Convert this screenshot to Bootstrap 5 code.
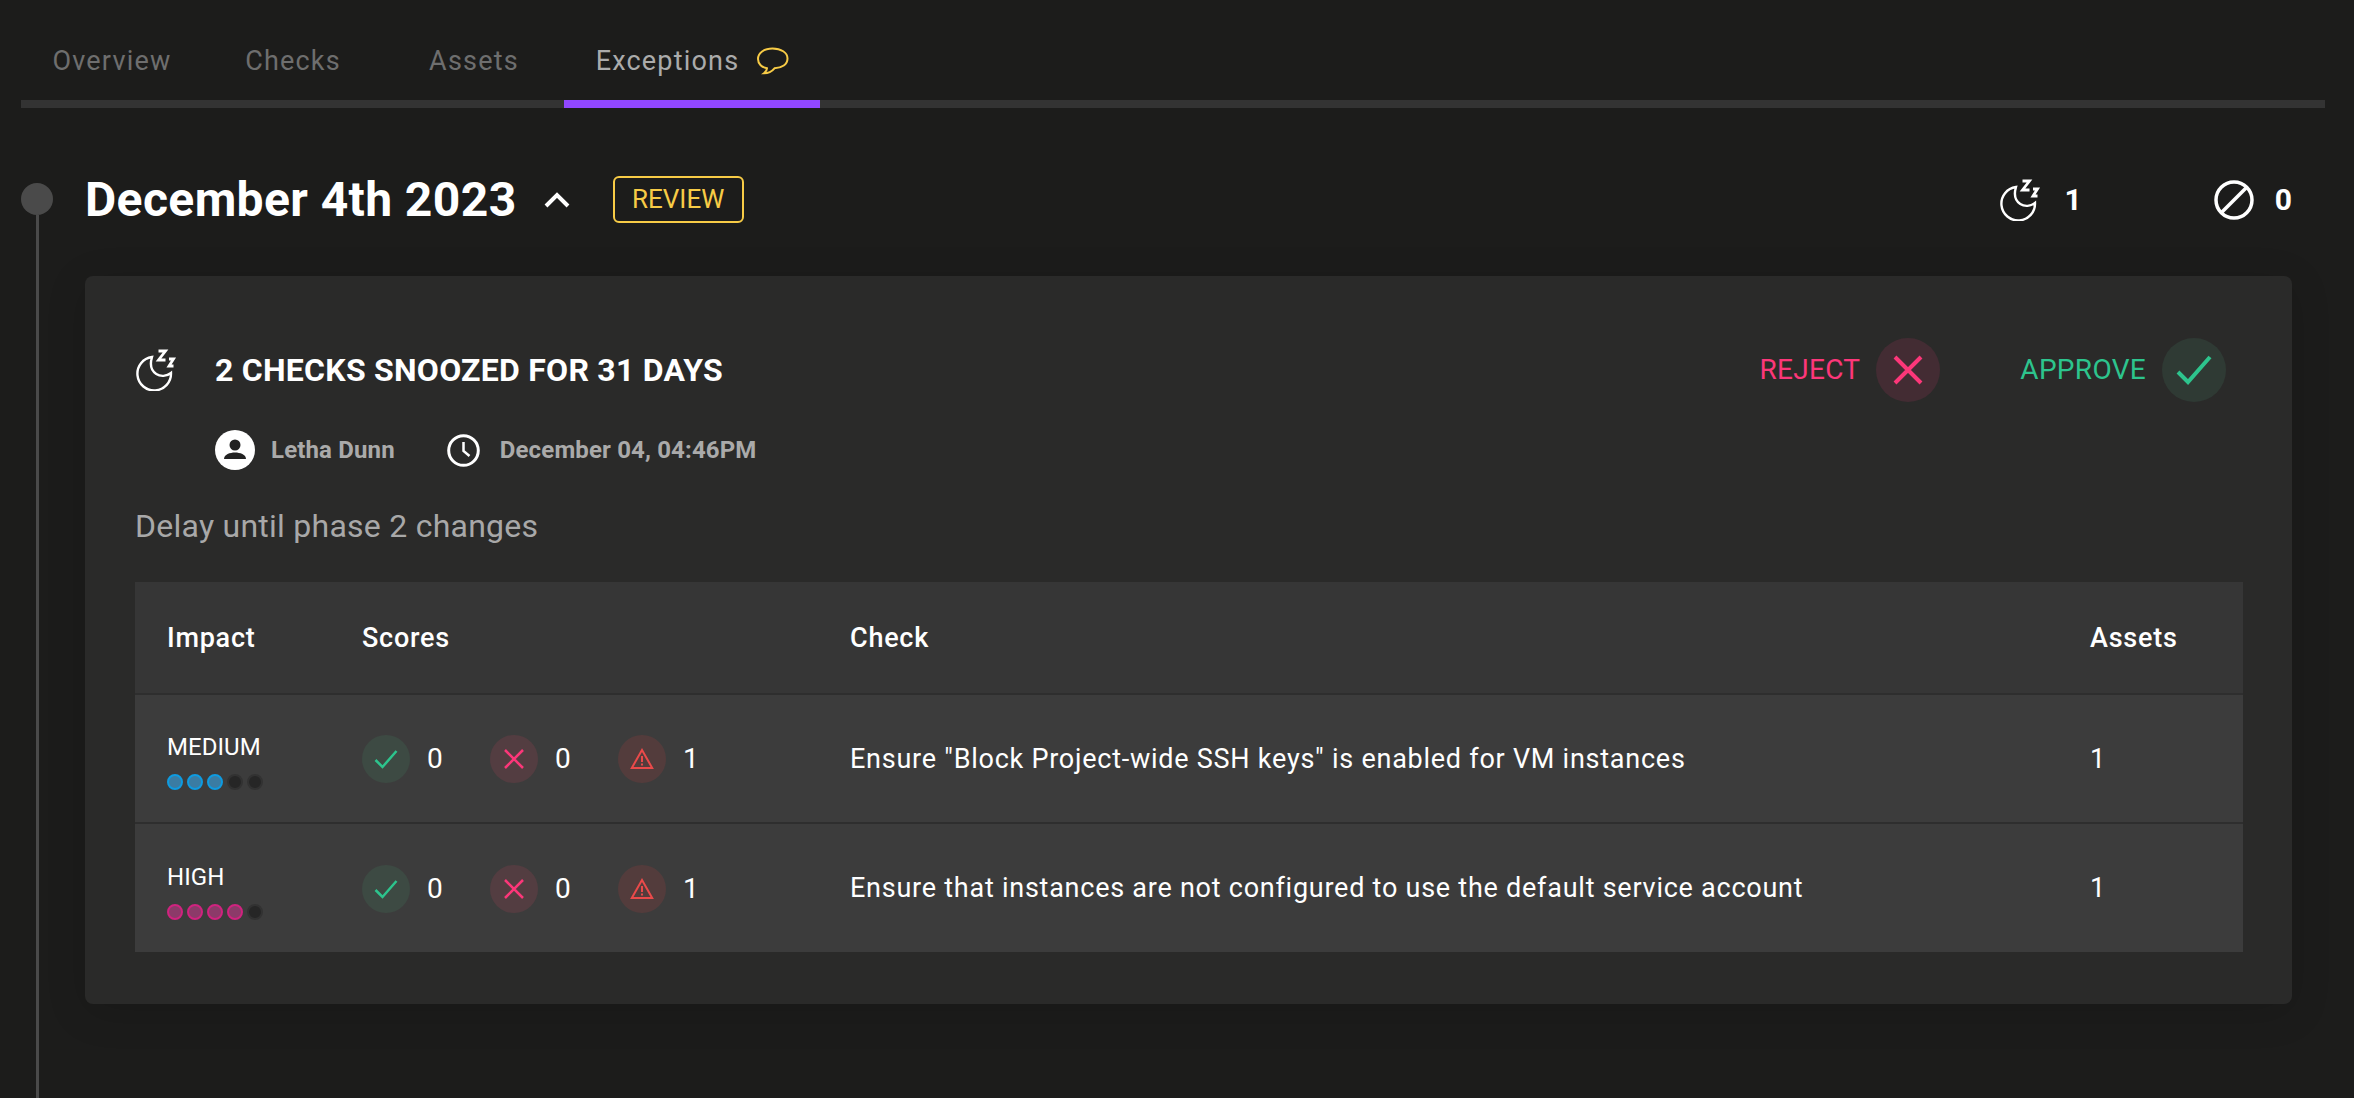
<!DOCTYPE html>
<html lang="en">
<head>
<meta charset="UTF-8">
<title>Exceptions</title>
<link href="https://cdn.jsdelivr.net/npm/bootstrap@5.3.0/dist/css/bootstrap.min.css" rel="stylesheet">
<style>
body { background: #1c1c1b; font-family: Roboto, "Liberation Sans", sans-serif; color: #fff; overflow: hidden; }
svg { display: block; flex-shrink: 0; }

/* tabs */
.tab-bar { margin: 0 29px 0 21px; height: 108px; border-bottom: 8px solid #333; }
.tab-bar .nav-link { width: 181px; height: 108px; margin: 0; padding: 22px 0 0 1px; border-radius: 0; border-bottom: 8px solid transparent; color: #6e6e6e; font-size: 27px; letter-spacing: 1.2px; display: flex; align-items: center; justify-content: center; gap: 17px; }
.tab-bar .nav-link.active { width: 256px; color: #ababab; border-bottom-color: #9147ff; }

/* timeline */
.timeline { margin-left: 21px; padding-right: 62px; gap: 32px; height: 990px; }
.rail { width: 32px; padding-top: 75px; }
.rail-dot { width: 32px; height: 32px; border-radius: 50%; background: #4a4a4a; }
.rail-line { width: 3px; background: #4a4a4a; }

.day-row { margin-top: 68px; height: 47px; margin-bottom: 53px; }
.day-title { font-size: 48px; font-weight: 700; letter-spacing: .4px; line-height: 1; margin: 0; }
.day-chevron { margin-left: 26px; }
.review-tag { border: 2px solid #f7cb46; border-radius: 6px; color: #f7cb46; font-size: 26px; height: 47px; width: 131px; margin-left: 42px; }
.day-count { font-size: 30px; font-weight: 700; }
.ban-icon { margin-left: 132px; }
.count-num { margin-left: 21px; }

/* card */
.snooze-card { background: #2a2a29; border: 0; border-radius: 8px; padding: 62px 49px 52px 50px; box-shadow: 0 8px 40px rgba(0,0,0,.14); color: #fff; }
.snooze-title { font-size: 32px; font-weight: 700; letter-spacing: .25px; margin: 0 0 0 38px; }
.action-text { font-size: 28px; font-weight: 400; letter-spacing: .3px; }
.action-circle { width: 64px; height: 64px; border-radius: 50%; }
.approve-block { margin-left: 80px; margin-right: 17px; }
.reject-txt { color: #fc3779; }
.approve-txt { color: #2dc48d; }
.reject-bg { background: #432c33; }
.approve-bg { background: #2f3a34; }
.meta-row { margin: 28px 0 0 80px; height: 40px; color: #aaa; font-size: 24px; font-weight: 700; letter-spacing: .15px; }
.clock-icon { margin-left: 52px; }
.meta-label { margin-left: 16px; }
.meta-label.date-label { margin-left: 20px; }
.note-text { color: #a8a8a8; font-size: 32px; letter-spacing: .25px; line-height: 40px; margin: 36px 0 36px; }

/* table */
.checks-table { --bs-table-bg: transparent; --bs-table-color: #fff; margin: 0; table-layout: fixed; width: 2108px; border-collapse: collapse; letter-spacing: .75px; }
.checks-table th { background: #363636; height: 112px; font-size: 27px; font-weight: 500; vertical-align: middle; padding: 2px 0 0; border: 0; }
.checks-table td { background: #3c3c3c; height: 129px; font-size: 27px; vertical-align: middle; padding: 1px 0 0; border: 0; border-top: 2px solid #2e2e2e; }
.checks-table .first-col { padding-left: 32px; }
.col-impact { width: 227px; }
.col-scores { width: 488px; }
.col-check { width: 1240px; }
.impact-cell { padding-top: 5px; }
.impact-name { font-size: 24px; font-weight: 400; letter-spacing: .05px; line-height: 28px; }
.impact-dots { gap: 4px; margin-top: 13px; }
.idot { width: 16px; height: 16px; border-radius: 50%; border: 2px solid #323232; background: #262626; }
.idot.med { border-color: #0e9be0; background: #3a7ca3; }
.idot.hi { border-color: #d0237f; background: #8c3a69; }
.score-item { width: 128px; gap: 17px; font-size: 28px; font-weight: 400; letter-spacing: 0; }
.score-circle { width: 48px; height: 48px; border-radius: 50%; }
.pass-bg { background: #3d4a43; }
.fail-bg { background: #533d41; }
.warn-bg { background: #533c3c; }
</style>
</head>
<body>

<ul class="nav tab-bar">
    <li class="nav-item"><a class="nav-link" href="#">Overview</a></li>
    <li class="nav-item"><a class="nav-link" href="#">Checks</a></li>
    <li class="nav-item"><a class="nav-link" href="#">Assets</a></li>
    <li class="nav-item">
        <a class="nav-link active" href="#">Exceptions
            <svg width="33" height="28" viewBox="0 0 33 28" fill="none" stroke="#f7cb46" stroke-width="2"><path d="M16.500 1.500C8 1.500 2 6 2 12c0 5 4 8.500 9 9.300 0 1.700-1 3.500-3 5 4 0 8-2 10.500-5C26 21 31.500 17.500 31.500 11.500 31.500 5.500 25 1.500 16.500 1.500Z"/></svg>
        </a>
    </li>
</ul>

<div class="d-flex timeline">
    <div class="rail d-flex flex-column align-items-center">
        <div class="rail-dot"></div>
        <div class="rail-line flex-grow-1"></div>
    </div>

    <div class="flex-grow-1">
        <div class="d-flex align-items-center day-row">
            <h1 class="day-title">December 4th 2023</h1>
            <svg class="day-chevron" width="28" height="18" viewBox="0 0 28 18" fill="none" stroke="#fff" stroke-width="4"><path d="M3 15 14 4l11 11"/></svg>
            <div class="review-tag d-flex align-items-center justify-content-center">REVIEW</div>
            <div class="d-flex align-items-center day-count ms-auto">
                <svg width="42" height="42" viewBox="0 0 42 42" fill="none" stroke="#fff" stroke-width="2.400"><path d="M17 8A16.800 16.800 0 1 0 36 24C27 31 12 25 17 8Z"/><path d="M23.500 2h7l-7 9h7M34 10h4.500l-4.500 7h4.500" stroke-width="2.800"/></svg>
                <span class="ms-4">1</span>
                <svg class="ban-icon" width="40" height="40" viewBox="0 0 40 40" fill="none" stroke="#fff" stroke-width="3.500"><circle cx="20" cy="20" r="18"/><path d="M8 32 32 8"/></svg>
                <span class="count-num">0</span>
            </div>
        </div>

        <div class="card snooze-card">
            <div class="d-flex align-items-center">
                <svg width="42" height="42" viewBox="0 0 42 42" fill="none" stroke="#fff" stroke-width="2.400"><path d="M17 8A16.800 16.800 0 1 0 36 24C27 31 12 25 17 8Z"/><path d="M23.500 2h7l-7 9h7M34 10h4.500l-4.500 7h4.500" stroke-width="2.800"/></svg>
                <h2 class="snooze-title">2 CHECKS SNOOZED FOR 31 DAYS</h2>
                <div class="d-flex align-items-center gap-3 ms-auto reject-txt action-text">
                    REJECT
                    <div class="action-circle reject-bg d-flex align-items-center justify-content-center">
                        <svg width="32" height="32" viewBox="0 0 32 32" fill="none" stroke="#fc3779" stroke-width="4"><path d="M3 3l26 26M29 3 3 29"/></svg>
                    </div>
                </div>
                <div class="d-flex align-items-center gap-3 approve-txt action-text approve-block">
                    APPROVE
                    <div class="action-circle approve-bg d-flex align-items-center justify-content-center">
                        <svg width="36" height="30" viewBox="0 0 36 30" fill="none" stroke="#2dc48d" stroke-width="4"><path d="M2 17l10 10L34 2"/></svg>
                    </div>
                </div>
            </div>

            <div class="d-flex align-items-center meta-row">
                <svg width="40" height="40" viewBox="0 0 40 40"><circle cx="20" cy="20" r="20" fill="#fff"/><circle cx="20" cy="15" r="5.500" fill="#222"/><path d="M9 29c0-4.500 6-6.500 11-6.500S31 24.500 31 29Z" fill="#222"/></svg>
                <span class="meta-label">Letha Dunn</span>
                <svg class="clock-icon" width="33" height="33" viewBox="0 0 33 33" fill="none" stroke="#fff" stroke-width="3"><circle cx="16.500" cy="16.500" r="14.800"/><path d="M16.500 8v9l6 5" stroke-width="2.500"/></svg>
                <span class="meta-label date-label">December 04, 04:46PM</span>
            </div>

            <p class="note-text">Delay until phase 2 changes</p>

            <table class="table checks-table">
                <colgroup>
                    <col class="col-impact"><col class="col-scores"><col class="col-check"><col>
                </colgroup>
                <thead>
                    <tr>
                        <th class="first-col">Impact</th>
                        <th>Scores</th>
                        <th>Check</th>
                        <th>Assets</th>
                    </tr>
                </thead>
                <tbody id="checkRows"></tbody>
            </table>
        </div>
    </div>
</div>

<script>
    const checkRows = [
        { impact: 'MEDIUM', level: 3, dot: 'med', title: 'Ensure "Block Project-wide SSH keys" is enabled for VM instances' },
        { impact: 'HIGH', level: 4, dot: 'hi', title: 'Ensure that instances are not configured to use the default service account' }
    ];

    const passIcon = '<svg width="24" height="20" viewBox="0 0 24 20" fill="none" stroke="#2dc48d" stroke-width="2.500"><path d="M1.500 11l7 7L22.500 2"/></svg>';
    const failIcon = '<svg width="22" height="22" viewBox="0 0 22 22" fill="none" stroke="#fc3779" stroke-width="2.500"><path d="M2 2l18 18M20 2 2 20"/></svg>';
    const warnIcon = '<svg width="24" height="22" viewBox="0 0 24 22" fill="none" stroke="#e94a4a" stroke-width="2"><path d="M12 2 1.800 20h20.400Z"/><path d="M12 8v6M12 15.500v2"/></svg>';

    function scoreItem(bg, icon, n) {
        return `<div class="d-flex align-items-center score-item">
            <div class="score-circle ${bg} d-flex align-items-center justify-content-center">${icon}</div><span>${n}</span>
        </div>`;
    }

    document.getElementById('checkRows').innerHTML = checkRows.map(r => {
        let dots = '';
        for (let i = 0; i < 5; i++) dots += `<div class="idot ${i < r.level ? r.dot : ''}"></div>`;
        return `<tr>
            <td class="first-col"><div class="impact-cell"><div class="impact-name">${r.impact}</div><div class="d-flex impact-dots">${dots}</div></div></td>
            <td><div class="d-flex">${scoreItem('pass-bg', passIcon, 0)}${scoreItem('fail-bg', failIcon, 0)}${scoreItem('warn-bg', warnIcon, 1)}</div></td>
            <td>${r.title}</td>
            <td>1</td>
        </tr>`;
    }).join('');
</script>
<script src="https://cdn.jsdelivr.net/npm/bootstrap@5.3.0/dist/js/bootstrap.bundle.min.js"></script>
</body>
</html>
